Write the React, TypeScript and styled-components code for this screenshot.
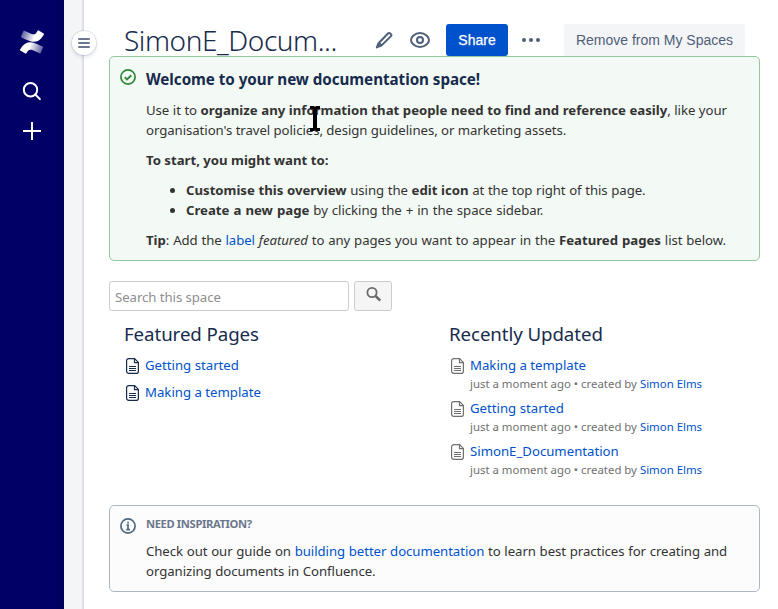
import React from 'react';
import styled, { createGlobalStyle, css } from 'styled-components';

const Global = createGlobalStyle`
  * { box-sizing: border-box; }
  html, body { margin: 0; padding: 0; background: #fff; }
  body {
    font-family: "Noto Sans", sans-serif;
    font-size: 13.2px;
    line-height: 20px;
    letter-spacing: -0.06px;
    color: #333;
    overflow: hidden;
  }
  b { letter-spacing: -0.01px; }
`;

const Page = styled.div`
  display: flex;
  width: 778px;
  height: 609px;
`;

const GlobalNav = styled.nav`
  flex: none;
  width: 64px;
  padding-top: 30px;
  display: flex;
  flex-direction: column;
  align-items: center;
  color: #fff;
  background: linear-gradient(to right, #000066 54px, #00005a 64px);
  svg { display: block; }
`;

const LogoSlot = styled.div`
  height: 24px;
  margin-bottom: 25px;
`;

const NavButton = styled.div`
  display: grid;
  place-items: center;
  width: 24px;
  height: 24px;
  margin-bottom: 16px;
`;

const Gutter = styled.aside`
  position: relative;
  flex: none;
  width: 20px;
  background: linear-gradient(to right, #f4f5f7 17px, #e9eaee 18px, #d8dade 20px);
`;

const MenuToggle = styled.div`
  position: absolute;
  left: 8px;
  top: 31px;
  width: 24px;
  height: 24px;
  border-radius: 50%;
  background: #fff;
  box-shadow: 0 0 0 1px rgba(9, 30, 66, 0.09), 0 2px 4px rgba(9, 30, 66, 0.13);
  display: flex;
  flex-direction: column;
  align-items: center;
  justify-content: center;
  gap: 2px;
`;

const MenuBar = styled.i`
  width: 12px;
  height: 2px;
  border-radius: 1px;
  background: #6b778c;
`;

const Main = styled.main`
  flex: 1;
  min-width: 0;
  padding: 24px 18px 0 25px;
`;

const Header = styled.header`
  display: flex;
  align-items: center;
  height: 32px;
  padding: 0 15px;
  color: #505f79;
  svg { display: block; flex: none; }
`;

const Title = styled.h1`
  margin: 0;
  width: 250px;
  font-size: 28px;
  line-height: 32px;
  font-weight: 300;
  letter-spacing: -0.42px;
  color: #172b4d;
  white-space: nowrap;
`;

const IconButton = styled.div<{ $gap?: number }>`
  flex: none;
  width: 24px;
  height: 24px;
  display: grid;
  place-items: center;
  margin-right: ${(p) => p.$gap ?? 0}px;
`;

const MoreButton = styled.div`
  flex: none;
  width: 24px;
  margin: 0 21px 0 11px;
`;

const Button = styled.button<{ $primary?: boolean }>`
  flex: none;
  height: 32px;
  padding: 0;
  border: 0;
  border-radius: 3px;
  width: ${(p) => (p.$primary ? 62 : 181)}px;
  background: ${(p) => (p.$primary ? '#0052cc' : '#f4f5f7')};
  color: ${(p) => (p.$primary ? '#fff' : '#505f79')};
  font: 14px/32px "Liberation Sans", Arial, sans-serif;
  letter-spacing: 0;
  ${(p) => p.$primary && css`-webkit-text-stroke: 0.25px #fff;`}
`;

const Panel = styled.section<{ $tone: 'success' | 'info' }>`
  display: flex;
  align-items: flex-start;
  border: 1px solid ${(p) => (p.$tone === 'success' ? '#91c89c' : '#aab8c6')};
  border-radius: 5px;
  background: ${(p) => (p.$tone === 'success' ? '#f3f9f4' : '#fcfcfc')};
  padding: ${(p) => (p.$tone === 'success' ? '11px 10px 10px' : '8px 10px 10px')};
  svg { display: block; flex: none; margin-top: ${(p) => (p.$tone === 'success' ? 1 : 4)}px; }
`;

const PanelBody = styled.div`
  margin-left: 10px;
  white-space: nowrap;
`;

const PanelTitle = styled.h2`
  margin: 1px 0 11px;
  font-size: 15.2px;
  line-height: 20px;
  letter-spacing: -0.04px;
  color: #172b4d;
`;

const Eyebrow = styled.h6`
  margin: 0 0 7px;
  font-size: 11.2px;
  line-height: 20px;
  letter-spacing: -0.37px;
  color: #6b778c;
`;

const Text = styled.p`
  margin: 0 0 10px;
  &:last-child { margin-bottom: 0; }
`;

const Line = styled.span<{ $space?: number }>`
  display: block;
  word-spacing: ${(p) => p.$space ?? 0}px;
`;

const Bullets = styled.ul`
  margin: 0 0 10px;
  padding-left: 40px;
`;

const Link = styled.a`
  color: #0052cc;
  text-decoration: none;
`;

const SearchRow = styled.form`
  display: flex;
  gap: 5px;
  margin-top: 20px;
`;

const SearchInput = styled.input`
  width: 240px;
  height: 30px;
  border: 1px solid #ccc;
  border-radius: 3px;
  padding: 2px 5px 0;
  font: 13.2px/20px "Noto Sans", sans-serif;
  letter-spacing: -0.06px;
  &::placeholder { color: #8e8e8e; opacity: 1; }
`;

const SearchButton = styled.div`
  width: 38px;
  height: 30px;
  border: 1px solid #ccc;
  border-radius: 3px;
  background: #f5f5f5;
  display: flex;
  padding: 5px 0 0 11px;
`;

const Columns = styled.div`
  display: grid;
  grid-template-columns: 325px 1fr;
  height: 182px;
  padding: 11px 15px 0;
  margin-bottom: 12px;
`;

const ColumnTitle = styled.h3`
  margin: 0 0 9px;
  font-size: 18.7px;
  line-height: 24px;
  font-weight: 400;
  letter-spacing: -0.08px;
  color: #172b4d;
`;

const Entry = styled.div<{ $tall?: boolean }>`
  display: flex;
  gap: 6px;
  height: ${(p) => (p.$tall ? 43 : 27)}px;
  white-space: nowrap;
  letter-spacing: 0;
  svg { display: block; flex: none; margin: 3px 0 0 2px; }
`;

const Meta = styled.div`
  font-size: 11.4px;
  line-height: 18px;
  color: #707070;
`;

const PointerLayer = styled.svg`
  position: absolute;
  left: 309px;
  top: 106px;
`;

const ConfluenceLogo = () => (
  <svg width="24" height="24" viewBox="0 0 24 24">
    <defs>
      <linearGradient id="lower" x1="22" y1="19" x2="8" y2="14" gradientUnits="userSpaceOnUse">
        <stop offset="0" stopColor="#fff" stopOpacity="0.4" />
        <stop offset="0.85" stopColor="#fff" />
      </linearGradient>
      <linearGradient id="upper" x1="2" y1="5" x2="16" y2="10" gradientUnits="userSpaceOnUse">
        <stop offset="0" stopColor="#fff" stopOpacity="0.4" />
        <stop offset="0.85" stopColor="#fff" />
      </linearGradient>
    </defs>
    <path fill="url(#lower)" d="M.87 18.257c-.248.382-.53.875-.763 1.245a.764.764 0 0 0 .255 1.04l4.965 3.054a.764.764 0 0 0 1.058-.26c.199-.332.454-.763.733-1.221 1.967-3.247 3.945-2.853 7.508-1.146l4.957 2.337a.764.764 0 0 0 1.028-.382l2.364-5.346a.764.764 0 0 0-.382-1 599.851 599.851 0 0 1-4.965-2.361C10.911 10.97 5.224 11.185.87 18.257z" />
    <path fill="url(#upper)" d="M23.131 5.743c.249-.405.531-.875.764-1.25a.764.764 0 0 0-.256-1.034L18.675.404a.764.764 0 0 0-1.058.26c-.195.335-.451.763-.734 1.225-1.966 3.246-3.945 2.85-7.508 1.146L4.437.694a.764.764 0 0 0-1.027.382L1.046 6.422a.764.764 0 0 0 .382 1c1.039.49 3.105 1.467 4.965 2.361 6.698 3.246 12.392 3.029 16.738-4.04z" />
  </svg>
);

const PageIcon = ({ color }: { color: string }) => (
  <svg width="13" height="16" viewBox="0 0 13 16" fill="none" stroke={color} strokeWidth="1.2">
    <path d="M8.6.6H2.8A2.2 2.2 0 0 0 .6 2.8v10.4a2.2 2.2 0 0 0 2.2 2.2h7.4a2.2 2.2 0 0 0 2.2-2.2V4.4z" />
    <path d="M8.5 1v3.6h3.6" />
    <path d="M3 8.5h7M3 10.5h7M3 12.5h7" strokeWidth="1" />
  </svg>
);

const featured = ['Getting started', 'Making a template'];
const recent = ['Making a template', 'Getting started', 'SimonE_Documentation'];

export default function App() {
  return (
    <>
      <Global />
      <Page>
        <GlobalNav>
          <LogoSlot><ConfluenceLogo /></LogoSlot>
          <NavButton>
            <svg width="20" height="20" viewBox="0 0 20 20" fill="none" stroke="#fff" strokeWidth="2">
              <circle cx="8.5" cy="8.7" r="6.7" />
              <path d="M13.3 13.5l4.6 4.6" strokeLinecap="round" />
            </svg>
          </NavButton>
          <NavButton>
            <svg width="18" height="18" viewBox="0 0 18 18" fill="none" stroke="#fff" strokeWidth="2">
              <path d="M9 0v18M0 9h18" />
            </svg>
          </NavButton>
        </GlobalNav>
        <Gutter>
          <MenuToggle><MenuBar /><MenuBar /><MenuBar /></MenuToggle>
        </Gutter>
        <Main>
          <Header>
            <Title>SimonE_Docum...</Title>
            <IconButton $gap={12}>
              <svg width="24" height="24" viewBox="0 0 24 24">
                <path fill="none" stroke="currentColor" strokeWidth="2" strokeLinejoin="round" d="M7 14.8l9.2-9.5a1.3 1.3 0 0 1 1.9 0l.9.9a1.3 1.3 0 0 1 0 1.9l-9.4 9.3z" />
                <path fill="currentColor" d="M5.6 14.4l4.2 4.2-4.8 1.7a.9.9 0 0 1-1.1-1.1z" />
              </svg>
            </IconButton>
            <IconButton $gap={14}>
              <svg width="24" height="24" viewBox="0 0 24 24" fill="none" stroke="currentColor" strokeWidth="2">
                <path d="M12 5c-5.4 0-9 4.2-9 7s3.6 7 9 7 9-4.2 9-7-3.6-7-9-7z" />
                <circle cx="12" cy="12" r="3" />
              </svg>
            </IconButton>
            <Button $primary>Share</Button>
            <MoreButton>
              <svg width="24" height="24" viewBox="0 0 24 24" fill="currentColor">
                <circle cx="5" cy="12" r="2" /><circle cx="12" cy="12" r="2" /><circle cx="19" cy="12" r="2" />
              </svg>
            </MoreButton>
            <Button>Remove from My Spaces</Button>
          </Header>

          <Panel $tone="success">
            <svg width="16" height="16" viewBox="0 0 16 16" fill="none" stroke="#2a8735" strokeWidth="1.7">
              <circle cx="8" cy="8" r="7.1" />
              <path d="M4.8 8.2l2.2 2.2 4.3-4.2" strokeWidth="1.9" />
            </svg>
            <PanelBody>
              <PanelTitle>Welcome to your new documentation space!</PanelTitle>
              <Text>
                <Line $space={0.2}>Use it to <b>organize any information that people need to find and reference easily</b>, like your</Line>
                <Line>organisation's travel policies, design guidelines, or marketing assets.</Line>
              </Text>
              <Text><b>To start, you might want to:</b></Text>
              <Bullets>
                <li><Line $space={0.27}><b>Customise this overview</b> using the <b>edit icon</b> at the top right of this page.</Line></li>
                <li><Line $space={0.65}><b>Create a new page</b> by clicking the + in the space sidebar.</Line></li>
              </Bullets>
              <Text>
                <Line $space={0.48}>
                  <b>Tip</b>: Add the <Link>label</Link> <i>featured</i> to any pages you want to appear in the <b>Featured pages</b> list below.
                </Line>
              </Text>
            </PanelBody>
          </Panel>

          <SearchRow>
            <SearchInput placeholder="Search this space" />
            <SearchButton>
              <svg width="16" height="16" viewBox="0 0 16 16" fill="none" stroke="#6b6b6b">
                <circle cx="6" cy="5.5" r="4.6" strokeWidth="1.8" />
                <path d="M9.5 9l4.8 4.6" strokeWidth="2.6" />
              </svg>
            </SearchButton>
          </SearchRow>

          <Columns>
            <div>
              <ColumnTitle>Featured Pages</ColumnTitle>
              {featured.map((name) => (
                <Entry key={name}><PageIcon color="#172b4d" /><Link>{name}</Link></Entry>
              ))}
            </div>
            <div>
              <ColumnTitle>Recently Updated</ColumnTitle>
              {recent.map((name) => (
                <Entry key={name} $tall>
                  <PageIcon color="#707070" />
                  <div>
                    <Link>{name}</Link>
                    <Meta>just a moment ago • created by <Link>Simon Elms</Link></Meta>
                  </div>
                </Entry>
              ))}
            </div>
          </Columns>

          <Panel $tone="info">
            <svg width="16" height="16" viewBox="0 0 16 16" fill="none" stroke="#4a6785" strokeWidth="1.7">
              <circle cx="8" cy="8" r="7.1" />
              <path d="M6.5 7H8v4.5M6.3 11.6h3.6M7.2 4.6h1.7" />
            </svg>
            <PanelBody>
              <Eyebrow>NEED INSPIRATION?</Eyebrow>
              <Text>
                <Line $space={0.36}>Check out our guide on <Link>building better documentation</Link> to learn best practices for creating and</Line>
                <Line $space={0.2}>organizing documents in Confluence.</Line>
              </Text>
            </PanelBody>
          </Panel>
        </Main>
      </Page>
      <PointerLayer width="12" height="26" viewBox="0 0 12 26">
        <path fill="#000" d="M1 0h4l1 1 1-1h4v3H8v19h3v3H7l-1-1-1 1H1v-3h3V3H1z" />
      </PointerLayer>
    </>
  );
}
